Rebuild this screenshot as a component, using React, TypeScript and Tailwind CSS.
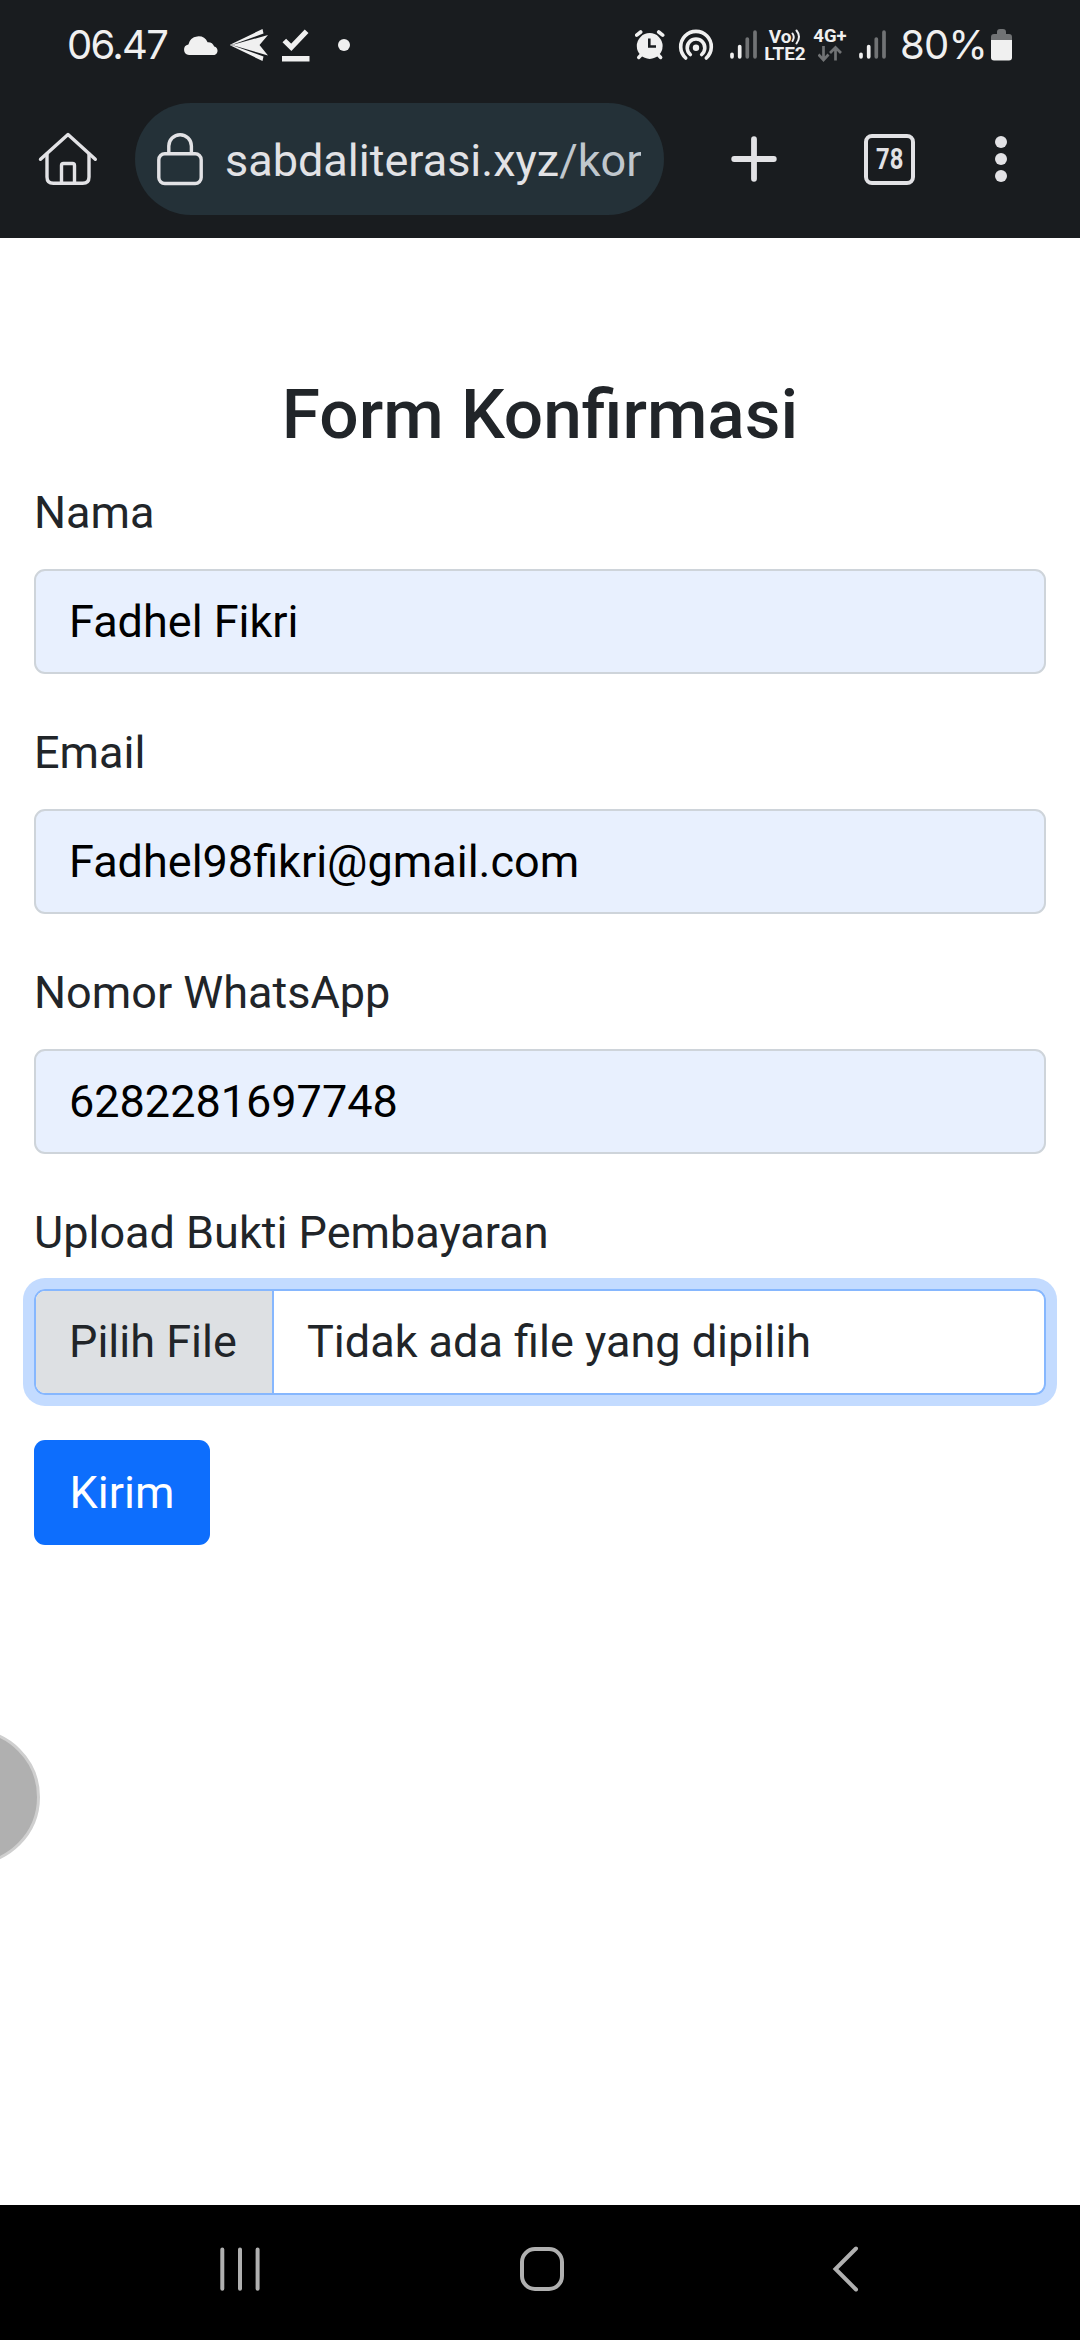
import React from "react";

function Signal() {
  return (
    <svg width="28" height="32" viewBox="0 0 28 32" className="block shrink-0" strokeWidth="3.7" strokeLinecap="round">
      <path d="M2 25.3V27.8M9.7 17.5V27.8" stroke="#f0f0f0" />
      <path d="M17.3 10V27.8M25 3.2V27.8" stroke="#717375" />
    </svg>
  );
}

function StatusBar() {
  return (
    <div className="flex h-[90px] items-center text-[#f0f0f0]">
      <span className="ml-[67px] w-[116px] whitespace-nowrap font-['Inter',sans-serif] text-[40px] leading-[48px] tracking-[-1.7px]">06.47</span>
      <svg width="37" height="22" viewBox="183 33 37 22" className="block shrink-0" fill="#f0f0f0">
        <path d="M189 54a5.3 5.3 0 0 1-.6-10.5A10.2 10.2 0 0 1 207.600 41.200a6.600 6.600 0 0 1 6.600 4.200a4.500 4.500 0 0 1 .3 8.600z" />
      </svg>
      <svg width="39" height="34" viewBox="230 28 39 34" className="ml-[10px] block shrink-0" fill="#f0f0f0">
        <path d="M229.500 45L262.500 29L263.500 33.500L233 44.600zM229.500 45L262.500 61L263.500 56.500L233 45.400zM232 45L268 35L259.500 45L268 55.500z" />
      </svg>
      <svg width="28" height="34" viewBox="282 28 28 34" className="ml-[13px] block shrink-0">
        <path d="M284.300 40.500L291.300 47.300L306.600 31.300" fill="none" stroke="#f0f0f0" strokeWidth="5.200" />
        <path d="M282 56h27.500v5.500H282z" fill="#f0f0f0" />
      </svg>
      <span className="ml-[28px] size-3 rounded-full bg-[#f0f0f0]" />

      <svg width="30" height="32" viewBox="635 29 30 32" className="ml-[285px] block shrink-0">
        <circle cx="649.700" cy="46" r="12.900" fill="#f0f0f0" />
        <path d="M636.700 35.200L640.700 32M662.700 35.200L658.700 32" stroke="#f0f0f0" strokeWidth="3.600" strokeLinecap="round" />
        <path d="M638.700 57.500L642 54M660.700 57.500L657.400 54" stroke="#f0f0f0" strokeWidth="3.400" strokeLinecap="round" />
        <path d="M649.300 38.500V46.500H656" fill="none" stroke="#191c1f" strokeWidth="2.600" />
      </svg>
      <svg width="36" height="32" viewBox="678 29 36 32" className="ml-[13px] block shrink-0" fill="none" stroke="#f0f0f0" strokeWidth="3.600" strokeLinecap="round">
        <path d="M685.700 58A15.300 15.300 0 1 1 706.300 58" />
        <path d="M690.300 54.500A8.800 8.800 0 1 1 701.700 54.500" />
        <circle cx="696" cy="47.800" r="3.200" fill="#f0f0f0" stroke="none" />
      </svg>
      <span className="ml-4"><Signal /></span>
      <div className="ml-[7px] flex w-[40px] flex-col items-center text-[19px] font-bold leading-[17px]">
        <span className="flex whitespace-nowrap">
          Vo
          <svg width="10" height="17" viewBox="0 0 10 17" className="block" fill="none" stroke="#f0f0f0" strokeWidth="2" strokeLinecap="round">
            <path d="M1.500 5.500q2.500 3.500 0 7.500M5.500 2.500q5 6 0 13" />
          </svg>
        </span>
        <span>LTE2</span>
      </div>
      <div className="ml-[8px] flex w-[34px] flex-col items-center font-bold leading-[17px]">
        <span className="whitespace-nowrap text-[18.5px]">4G+</span>
        <svg width="24" height="17" viewBox="818 46 24 17" className="block" fill="none" stroke="#717375" strokeWidth="2.700">
          <path d="M823.500 47V60.500M818.500 55.500L823.500 61L828.500 55.500M835.500 61.500V49M830 54L835.500 48.500L841 54" />
        </svg>
      </div>
      <span className="ml-[12px]"><Signal /></span>
      <span className="ml-[13px] w-[91px] whitespace-nowrap font-['Inter',sans-serif] text-[40px] leading-[48px] tracking-[-0.8px]">80%</span>
      <svg width="21" height="32" viewBox="0 0 21 32" className="block shrink-0">
        <path d="M0 12V8q0-3 3-3H6V3q0-3 3-3h3q3 0 3 3v2h3q3 0 3 3v4z" fill="#717375" />
        <path d="M0 11H21V28.500q0 3-3 3H3q-3 0-3-3z" fill="#f0f0f0" />
      </svg>
    </div>
  );
}

function Toolbar() {
  return (
    <div className="flex h-[138px] items-center">
      <svg width="60" height="56" viewBox="38 131 60 56" className="ml-[38px] block shrink-0" fill="none" stroke="#e2e2e5" strokeWidth="3.400" strokeLinecap="round" strokeLinejoin="round">
        <path d="M40.500 159.300L68 134.500L95.300 159.300" />
        <path d="M47 154V177q0 6.300 6.300 6.300H82.700q6.300 0 6.300-6.300V154" />
        <path d="M61.500 183V165.500q0-2 2-2h9q2 0 2 2V183" />
      </svg>
      <div className="ml-[37px] flex h-28 w-[529px] items-center rounded-full bg-[#243138] pl-[22px]">
        <svg width="46" height="54" viewBox="157 132 46 54" className="block shrink-0" fill="none" stroke="#e2e2e5" strokeWidth="3.400">
          <rect x="158.800" y="153.700" width="42.400" height="29.800" rx="6" />
          <path d="M168.800 153.500V146a11.300 11.300 0 0 1 22.600 0V153.500" />
        </svg>
        <div className="ml-[22px] mt-[4px] w-[416px] overflow-hidden whitespace-nowrap text-[45px] leading-[60px] text-[#e2e2e5]">
          sabdaliterasi.xyz<span className="text-[#c0c7cd]">/kon</span>
        </div>
      </div>
      <svg width="46" height="46" viewBox="0 0 46 46" className="ml-[67px] block shrink-0" stroke="#e2e2e5" strokeWidth="5.800" strokeLinecap="round">
        <path d="M23 3.200V42.800M3.200 23H42.800" />
      </svg>
      <div className="ml-[87px] flex size-[51px] items-center justify-center rounded-[8px] border-4 border-[#e2e2e5]">
        <span className="scale-x-[0.82] text-[29px] font-bold leading-none text-[#e2e2e5]">78</span>
      </div>
      <div className="ml-[80px] flex flex-col gap-[5px]">
        <span className="size-3 rounded-full bg-[#e2e2e5]" />
        <span className="size-3 rounded-full bg-[#e2e2e5]" />
        <span className="size-3 rounded-full bg-[#e2e2e5]" />
      </div>
    </div>
  );
}

function Field({ label, value }: { label: string; value: string }) {
  return (
    <div className="mb-[45px]">
      <label className="block h-[90px] text-[45px] leading-[68px]">{label}</label>
      <div className="h-[105px] rounded-[11px] border-2 border-[#ced4da] bg-[#e8f0fe] px-[33px] text-[45px] leading-[101px] text-black">
        {value}
      </div>
    </div>
  );
}

export default function App() {
  return (
    <div className="relative flex h-[2340px] w-[1080px] flex-col overflow-hidden bg-white font-['Roboto',sans-serif] text-[#212529]">
      <header className="h-[238px] shrink-0 bg-[#191c1f]">
        <StatusBar />
        <Toolbar />
      </header>

      <main className="flex-1 px-[34px] pt-[136px]">
        <h1 className="h-[105px] text-center text-[69.4px] font-medium leading-[82px]">Form Konfirmasi</h1>
        <Field label="Nama" value="Fadhel Fikri" />
        <Field label="Email" value="Fadhel98fikri@gmail.com" />
        <Field label="Nomor WhatsApp" value="6282281697748" />
        <label className="block h-[90px] text-[45px] leading-[68px]">Upload Bukti Pembayaran</label>
        <div className="flex h-[106px] overflow-hidden rounded-[11px] border-2 border-[#86b7fe] text-[45px] leading-[102px] shadow-[0_0_0_11px_#c3dbff]">
          <span className="w-[238px] shrink-0 border-r-2 border-[#86b7fe] bg-[#dde0e3] pl-[33px]">Pilih File</span>
          <span className="pl-[33px]">Tidak ada file yang dipilih</span>
        </div>
        <button className="mt-[45px] block h-[105px] w-[176px] rounded-[11px] bg-[#0d6efd] text-[45px] leading-[105px] text-white">Kirim</button>
      </main>

      <div className="absolute left-[-96px] top-[1729px] size-[136px] rounded-full border-[3px] border-[#cfcfcf] bg-[#b0b0b0]" />

      <nav className="flex h-[135px] shrink-0 items-center bg-black pb-[7px]">
        <svg width="40" height="44" viewBox="220 2247 40 44" className="ml-[220px] block" stroke="#b0b0b0" strokeWidth="4" strokeLinecap="round">
          <path d="M222.300 2249.500V2288.800M240 2249.500V2288.800M257.600 2249.500V2288.800" />
        </svg>
        <svg width="46" height="46" viewBox="519 2246 46 46" className="ml-[259px] block">
          <rect x="522" y="2249" width="40" height="40" rx="13" fill="none" stroke="#b0b0b0" strokeWidth="4" />
        </svg>
        <svg width="28" height="48" viewBox="832 2245 28 48" className="ml-[267px] block" fill="none" stroke="#b0b0b0" strokeWidth="4" strokeLinecap="round">
          <path d="M856 2248.500L835.500 2269L856 2289.500" />
        </svg>
      </nav>
    </div>
  );
}
